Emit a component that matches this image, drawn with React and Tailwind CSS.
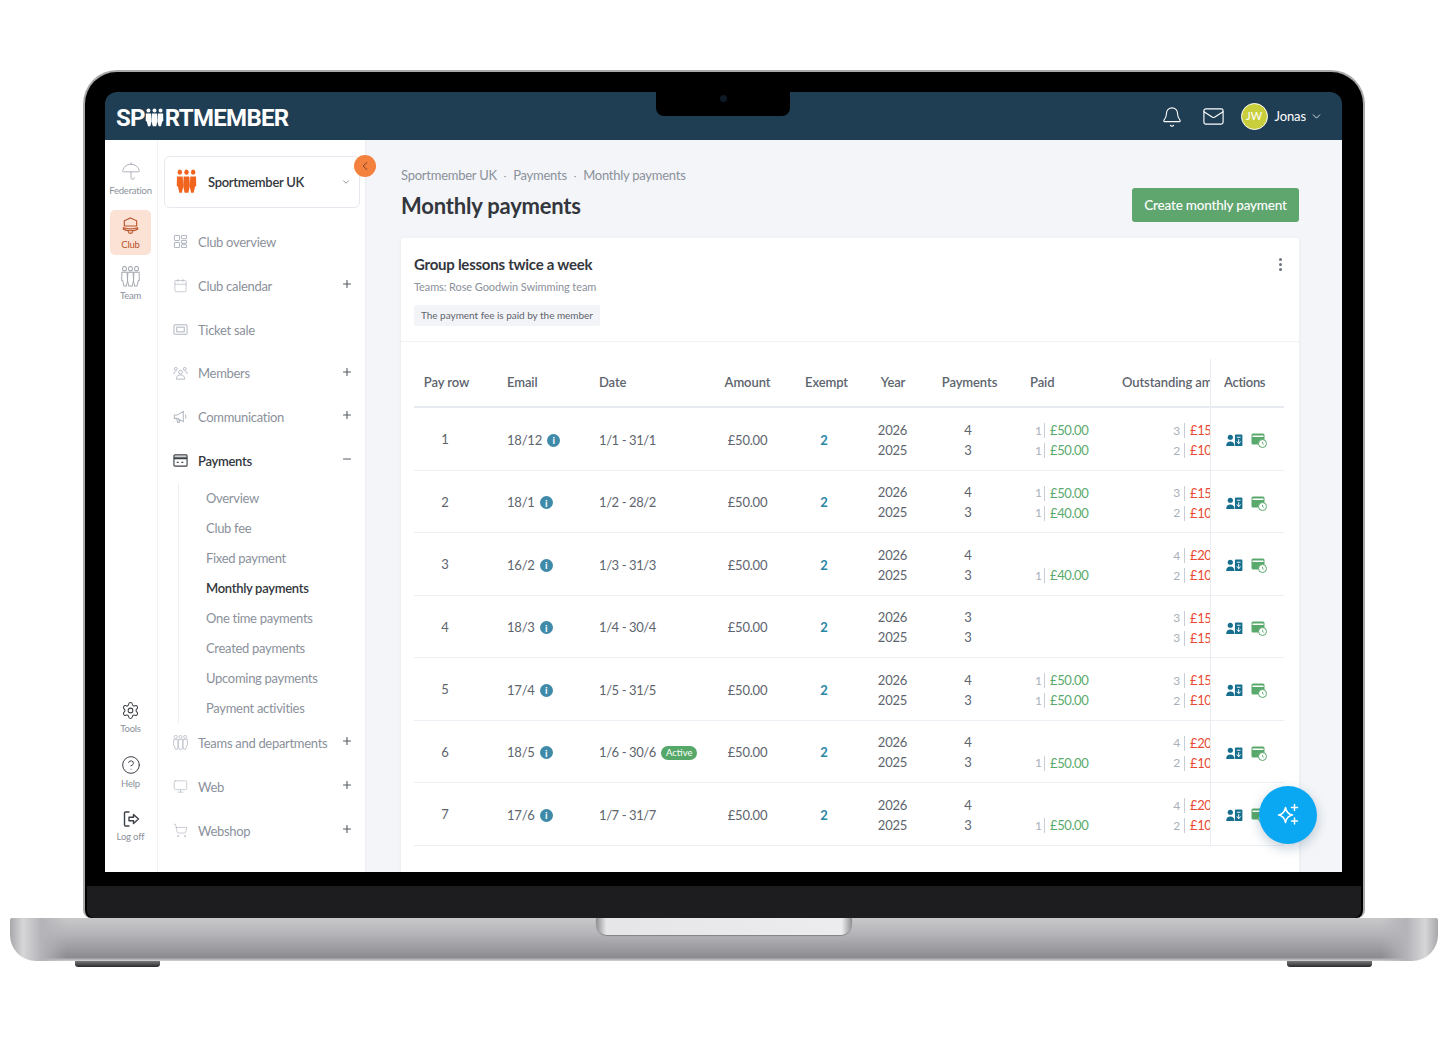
import React from "react";
import { Bell, Mail, ChevronDown, ChevronLeft, Plus, Minus, Settings, CircleHelp, Calendar, Monitor, ShoppingCart, Umbrella } from "lucide-react";

function People({ className, color = "currentColor", stroke = false }) {
  const p = stroke ? { fill: "none", stroke: color, strokeWidth: 1.1 } : { fill: color };
  return (
    <svg viewBox="1 1 22 22" preserveAspectRatio="none" className={className}>
      <circle cx="5" cy="3.800" r="2.300" {...p} />
      <circle cx="12" cy="3.800" r="2.300" {...p} />
      <circle cx="19" cy="3.800" r="2.300" {...p} />
      <path d="M2 7.500h6l.6 9-1.400 5.500H4.500L3 16.500l-1.200-.5z" {...p} />
      <path d="M9 7.500h6l.5 8.500-1.500 6h-4l-1.500-6z" {...p} />
      <path d="M16 7.500h6l.2 8.500-1.200.5-1.500 5.500h-2.700l-1.400-5.500z" {...p} />
    </svg>
  );
}

function GridIcon() {
  return (
    <svg viewBox="0 0 16 16" className="w-[15px] h-[15px]" fill="none" stroke="#b3b8c2" strokeWidth="1.1">
      <rect x="1.500" y="1.500" width="5.500" height="5.500" rx="1" />
      <rect x="9" y="1.500" width="5.500" height="3.500" rx="1" />
      <rect x="1.500" y="9" width="5.500" height="5.500" rx="1" />
      <rect x="9" y="7" width="5.500" height="3" rx="1" />
      <rect x="9" y="11.500" width="5.500" height="3" rx="1" />
    </svg>
  );
}
function TicketIcon() {
  return (
    <svg viewBox="0 0 16 16" className="w-[15px] h-[15px]" fill="none" stroke="#b3b8c2" strokeWidth="1.1">
      <rect x="1" y="3" width="14" height="10" rx="1" />
      <rect x="4" y="5.500" width="8" height="5" />
    </svg>
  );
}
function MembersIcon() {
  return (
    <svg viewBox="0 0 16 16" className="w-[15px] h-[15px]" fill="none" stroke="#b3b8c2" strokeWidth="1">
      <circle cx="3" cy="3" r="1.500" />
      <circle cx="12.500" cy="3" r="1.500" />
      <circle cx="8" cy="6.500" r="2" />
      <path d="M3.500 14c0-3 2-4.500 4.500-4.500s4.500 1.500 4.500 4.500zM1 8.500c0-2 1-3 2.500-3M15 8.500c0-2-1-3-2.500-3" />
    </svg>
  );
}
function MegaIcon() {
  return (
    <svg viewBox="0 0 16 16" className="w-[15px] h-[15px]" fill="none" stroke="#b3b8c2" strokeWidth="1.1">
      <path d="M1.500 6.500v3.500h3l6.500 3.500V2.500L4.500 6.500zM4 10.500l1 4h2l-1-3.500M13 6c1 .8 1 3 0 4" />
    </svg>
  );
}
function CardIcon() {
  return (
    <svg viewBox="0 0 16 16" className="w-[15px] h-[15px]" fill="none" stroke="#3c4148" strokeWidth="1.2">
      <rect x="1" y="2" width="14" height="12" rx="1" />
      <path d="M1 6h14M4 10h2M9 10h2M1 4.500h14" />
    </svg>
  );
}
function LogOffIcon() {
  return (
    <svg viewBox="0 0 18 18" className="w-[18px] h-[18px]" fill="none" stroke="#3c4148" strokeWidth="1.400" strokeLinejoin="round" strokeLinecap="round">
      <path d="M7 2H3.500a1 1 0 0 0-1 1v12a1 1 0 0 0 1 1H7" />
      <path d="M7 7.200h4.500V4.500L16.500 9l-5 4.500v-2.700H7z" />
    </svg>
  );
}
function ClubIcon() {
  return (
    <svg viewBox="0 0 20 20" className="w-[19px] h-[19px]" fill="none" stroke="#b9532a" strokeWidth="1.200">
      <path d="M10 1l6.500 3v5.500H3.500V4zM2.500 11.500c2 0 3.500 1 7.500 1s5.500-1 7.500-1v1.500c-2 1.200-4 1.500-7.500 1.500s-5.500-.3-7.500-1.500zM7.500 15c.5 3 4.500 3 5 0" />
    </svg>
  );
}
function PersonPhone() {
  return (
    <svg viewBox="0 0 18 14" className="w-[17px] h-[13px]">
      <circle cx="4.500" cy="3.500" r="2.800" fill="#176f8e" />
      <path d="M0 13c0-3.500 2-5 4.500-5S9 9.500 9 13z" fill="#176f8e" />
      <rect x="9.500" y="0.500" width="8" height="12.500" rx="1" fill="#176f8e" />
      <path d="M11.500 3.500h4M13.500 5.500v5M11.500 8l2 2.500 2-2.500" stroke="#fff" strokeWidth="1" fill="none" />
    </svg>
  );
}
function CardClock() {
  return (
    <svg viewBox="0 0 16 15" className="w-[16px] h-[15px]">
      <rect x="0.500" y="0.500" width="13" height="11" rx="1.500" fill="#5aa96c" />
      <rect x="1.500" y="2.500" width="11" height="1.500" fill="#fff" />
      <circle cx="11.500" cy="10.500" r="4" fill="#fff" stroke="#5aa96c" strokeWidth="1" />
      <path d="M11.500 8.800v1.800l1.300.7" stroke="#5aa96c" strokeWidth="0.900" fill="none" />
    </svg>
  );
}
function Sparkle() {
  return (
    <svg viewBox="0 0 26 26" className="w-[26px] h-[26px]" fill="none" stroke="#fff" strokeWidth="1.500" strokeLinejoin="round" strokeLinecap="round">
      <path d="M10.500 5.500c.8 4.500 2.500 6.800 7 7.500-4.500.8-6.200 3-7 7.500-.8-4.500-2.500-6.700-7-7.500 4.500-.7 6.200-3 7-7.500z" />
      <path d="M19.500 2.500v6M16.500 5.500h6M19.500 16v6M16.500 19h6" />
    </svg>
  );
}
function Info() {
  return (
    <span className="w-[13px] h-[13px] rounded-full bg-[#3f8aa8] flex items-center justify-center text-white text-[10px] font-bold leading-none shrink-0">i</span>
  );
}

const navTop = [
  { label: "Club overview", icon: <GridIcon /> },
  { label: "Club calendar", icon: <Calendar size={15} strokeWidth={1.1} color="#b3b8c2" />, plus: true },
  { label: "Ticket sale", icon: <TicketIcon /> },
  { label: "Members", icon: <MembersIcon />, plus: true },
  { label: "Communication", icon: <MegaIcon />, plus: true },
];
const navBottom = [
  { label: "Teams and departments", icon: <People className="w-[15px] h-[15px]" color="#b3b8c2" stroke />, plus: true },
  { label: "Web", icon: <Monitor size={15} strokeWidth={1.1} color="#b3b8c2" />, plus: true },
  { label: "Webshop", icon: <ShoppingCart size={15} strokeWidth={1.1} color="#b3b8c2" />, plus: true },
];
const subs = ["Overview", "Club fee", "Fixed payment", "Monthly payments", "One time payments", "Created payments", "Upcoming payments", "Payment activities"];

const rows = [
  { n: 1, e: "18/12", d: "1/1 - 31/1", p: [4, 3], paid: [[1, "50"], [1, "50"]], out: [[3, "150"], [2, "100"]] },
  { n: 2, e: "18/1", d: "1/2 - 28/2", p: [4, 3], paid: [[1, "50"], [1, "40"]], out: [[3, "150"], [2, "100"]] },
  { n: 3, e: "16/2", d: "1/3 - 31/3", p: [4, 3], paid: [null, [1, "40"]], out: [[4, "200"], [2, "100"]] },
  { n: 4, e: "18/3", d: "1/4 - 30/4", p: [3, 3], paid: [null, null], out: [[3, "150"], [3, "150"]] },
  { n: 5, e: "17/4", d: "1/5 - 31/5", p: [4, 3], paid: [[1, "50"], [1, "50"]], out: [[3, "150"], [2, "100"]] },
  { n: 6, e: "18/5", d: "1/6 - 30/6", active: true, p: [4, 3], paid: [null, [1, "50"]], out: [[4, "200"], [2, "100"]] },
  { n: 7, e: "17/6", d: "1/7 - 31/7", p: [4, 3], paid: [null, [1, "50"]], out: [[4, "200"], [2, "100"]] },
];

const gridCols = "grid grid-cols-[62px_113px_126px_65px_93px_40px_110px_77px_110px_74px]";

function NavItem({ label, icon, plus, minus, active }) {
  return (
    <div className="h-[43.75px] flex items-center pl-[15px] pr-[12px]">
      <span className="w-[25px] flex shrink-0">{icon}</span>
      <span className={active ? "mt-[2px] text-[13px] text-[#33373d] font-semibold tracking-[-0.3px]" : "mt-[2px] text-[13px] text-[#8b919b] tracking-[-0.3px]"}>{label}</span>
      <span className="ml-auto -mt-[3px]">
        {plus && <Plus size={12} strokeWidth={2.2} color="#555a62" />}
        {minus && <Minus size={12} strokeWidth={2.2} color="#555a62" />}
      </span>
    </div>
  );
}

function RailItem({ icon, label, active, labelClass = "mt-[3px]" }) {
  return (
    <div className={active ? "w-[41px] h-[45px] rounded-[5px] bg-[#fbe2d5] flex flex-col items-center pt-[7px] text-[#b9532a]" : "w-[41px] flex flex-col items-center text-[#8b919b]"}>
      {icon}
      <span className={`text-[9.5px] leading-[12px] tracking-[-0.2px] ${labelClass}`}>{label}</span>
    </div>
  );
}

function Money({ item, color, numW }) {
  if (!item) return <div className="h-[20px]" />;
  return (
    <div className="h-[20px] flex items-center whitespace-nowrap">
      <span className={`${numW} text-right text-[12px] text-[#aab0ba] shrink-0`}>{item[0]}</span>
      <span className="w-[1px] h-[15px] bg-[#c9ced6] ml-[4px] mr-[5px] shrink-0" />
      <span className={`text-[13px] tracking-[-0.4px] ${color}`}>£{item[1]}.00</span>
    </div>
  );
}

function Row({ r }) {
  return (
    <div className={`${gridCols} h-[62.5px] border-b border-[#eceff4] items-center text-[13px] tracking-[-0.2px] text-[#5d646e]`}>
      <div className="text-center pt-[2px]">{r.n}</div>
      <div className="pl-[31px] pt-[3px] flex items-center gap-[5px]">{r.e}<Info /></div>
      <div className="pl-[10px] pt-[3px] flex items-center gap-[5px] whitespace-nowrap tracking-[-0.4px]">
        {r.d}
        {r.active && <span className="h-[14px] px-[5px] rounded-full bg-[#55a868] text-white text-[9.5px] tracking-normal leading-[14px]">Active</span>}
      </div>
      <div className="text-center pt-[3px]">£50.00</div>
      <div className="text-center pr-[5px] pt-[3px] font-bold text-[#2b86a5]">2</div>
      <div className="leading-[20px] text-center -ml-[1px] pt-[2px]"><div>2026</div><div>2025</div></div>
      <div className="leading-[20px] text-center pt-[2px]"><div>{r.p[0]}</div><div>{r.p[1]}</div></div>
      <div className="pl-[12px] pt-[4px]">
        <Money item={r.paid[0]} color="text-[#5aaa6e]" numW="w-[5px]" />
        <Money item={r.paid[1]} color="text-[#5aaa6e]" numW="w-[5px]" />
      </div>
      <div className="pl-[73px] overflow-hidden pt-[4px]">
        <Money item={r.out[0]} color="text-[#ea4a35]" numW="w-[7px]" />
        <Money item={r.out[1]} color="text-[#ea4a35]" numW="w-[7px]" />
      </div>
      <div className="h-full border-l border-[#e8ecf2] pl-[15px] pt-[4px] flex items-center gap-[8px]">
        <PersonPhone />
        <CardClock />
      </div>
    </div>
  );
}

export default function App() {
  return (
    <div className="w-[1448px] h-[1063px] bg-white overflow-hidden pt-[70px] font-[Lato,sans-serif]">
      {/* Lid */}
      <div className="relative ml-[83px] w-[1282px] h-[848px] rounded-t-[34px] rounded-b-[8px] bg-black border-[2px] border-b-0 border-[#a9a9ac] pt-[20px] pl-[20px] flex flex-col">
        <div className="w-[1237px] h-[780px] rounded-t-[12px] overflow-hidden flex flex-col relative shrink-0">
          {/* Notch */}
          <div className="absolute left-[551px] top-0 w-[134px] h-[24px] bg-black rounded-b-[8px] z-20 flex justify-center pt-[3px]">
            <span className="w-[7px] h-[7px] rounded-full bg-[#0d1a26]" />
          </div>
          {/* Header */}
          <header className="h-[48px] bg-[#1f3d53] flex items-center pl-[11px] pr-[19px] shrink-0">
            <div className="flex items-center pt-[3px] text-white font-[Roboto,sans-serif] font-bold text-[24px] tracking-[-0.7px] leading-none">
              <span>SP</span>
              <People className="w-[19px] h-[19px]" color="#fff" />
              <span className="ml-[1px]">RTMEMBER</span>
            </div>
            <div className="ml-auto flex items-center text-white pt-[1px]">
              <Bell size={22} strokeWidth={1.2} />
              <Mail size={23} strokeWidth={1.2} className="ml-[19px]" />
              <div className="ml-[16px] w-[27px] h-[27px] rounded-full bg-[#c9cf3c] border border-white flex items-center justify-center text-[11px]">JW</div>
              <span className="ml-[7px] text-[13px] tracking-[-0.1px]">Jonas</span>
              <ChevronDown size={13} strokeWidth={1.5} className="ml-[4px]" />
            </div>
          </header>
          {/* Body */}
          <div className="flex-1 flex min-h-0 bg-[#f3f5f8]">
            {/* Rail */}
            <aside className="w-[53px] bg-white border-r border-[#f2f3f6] flex flex-col items-center pt-[21px] pb-[29px] pr-[1px] shrink-0">
              <RailItem icon={<Umbrella size={20} strokeWidth={1} color="#a1a6ae" />} label="Federation" labelClass="mt-[4px]" />
              <div className="mt-[13px]"><RailItem active icon={<ClubIcon />} label="Club" /></div>
              <div className="mt-[11px]"><RailItem icon={<People className="w-[19px] h-[21px]" color="#a1a6ae" stroke />} label="Team" /></div>
              <div className="mt-auto flex flex-col gap-[20px] text-[#8b919b]">
                <RailItem icon={<Settings size={19} strokeWidth={1.3} color="#3c4148" />} label="Tools" />
                <RailItem icon={<CircleHelp size={20} strokeWidth={1.2} color="#3c4148" />} label="Help" />
                <RailItem icon={<LogOffIcon />} label="Log off" />
              </div>
            </aside>
            {/* Sidebar */}
            <aside className="relative w-[207px] bg-white pt-[16px] shrink-0 shadow-[1px_0_2px_rgba(20,30,50,0.04)]">
              <span className="absolute left-[196px] top-[15px] w-[22px] h-[22px] rounded-full bg-[#f5813f] flex items-center justify-center z-10">
                <ChevronLeft size={14} strokeWidth={1.400} color="#5a3020" />
              </span>
              <div className="ml-[6px] w-[196px] h-[52px] rounded-[6px] border border-[#e6e8ef] flex items-center pl-[11px] pr-[8px]">
                <People className="w-[21px] h-[25px] -mt-[2px]" color="#f0641e" />
                <span className="ml-[11px] mt-[1px] text-[13px] font-semibold text-[#33373d] tracking-[-0.3px]">Sportmember UK</span>
                <ChevronDown size={10} strokeWidth={1.500} color="#555a62" className="ml-auto" />
              </div>
              <nav className="mt-[12px]">
                {navTop.map((n) => <NavItem key={n.label} {...n} />)}
                <NavItem label="Payments" icon={<CardIcon />} minus active />
                <div className="ml-[20px] border-l border-[#eceff4] pl-[27px] -mb-[1.6px]">
                  {subs.map((s) => (
                    <div key={s} className={s === "Monthly payments" ? "h-[30px] pt-[2px] flex items-center text-[13px] font-semibold text-[#33373d] tracking-[-0.3px]" : "h-[30px] pt-[2px] flex items-center text-[13px] text-[#8b919b] tracking-[-0.3px]"}>{s}</div>
                  ))}
                </div>
                {navBottom.map((n) => <NavItem key={n.label} {...n} />)}
              </nav>
            </aside>
            {/* Main */}
            <main className="flex-1 min-w-0 pl-[36px] pr-[43px] pt-[25px] relative">
              <div className="h-[19px] pt-[2px] flex items-center gap-[7px] text-[13px] text-[#8b919b] tracking-[-0.25px]">
                <span>Sportmember UK</span><span className="text-[10px]">·</span><span>Payments</span><span className="text-[10px]">·</span><span>Monthly payments</span>
              </div>
              <div className="mt-[4px] h-[34px] flex items-center justify-between">
                <h1 className="text-[22px] font-bold text-[#33373d] tracking-[-0.2px]">Monthly payments</h1>
                <button className="w-[167px] h-[34px] pt-[1px] rounded-[3px] bg-[#5fa56e] text-white text-[13.5px] font-medium tracking-[-0.2px]">Create monthly payment</button>
              </div>
              <section className="mt-[16px] bg-white rounded-[3px] shadow-[0_1px_4px_rgba(20,30,50,0.06)] h-[700px]">
                <div className="pt-[17px] pl-[13px] pr-[17px] pb-[15px] border-b border-[#f0f2f6] relative">
                  <div className="flex justify-between items-center h-[19px]">
                    <h2 className="text-[15px] font-bold text-[#33373d] tracking-[-0.25px]">Group lessons twice a week</h2>
                    <span className="flex flex-col gap-[2px]">
                      <i className="w-[3px] h-[3px] rounded-full bg-[#6b7280]" />
                      <i className="w-[3px] h-[3px] rounded-full bg-[#6b7280]" />
                      <i className="w-[3px] h-[3px] rounded-full bg-[#6b7280]" />
                    </span>
                  </div>
                  <div className="mt-[4px] h-[18px] flex items-center text-[11px] tracking-[-0.1px] text-[#8b919b]">Teams: Rose Goodwin Swimming team</div>
                  <div className="mt-[9px] h-[21px] w-fit px-[7px] rounded-[2px] bg-[#f3f4f7] flex items-center text-[10px] tracking-[-0.03px] text-[#5d646e]">The payment fee is paid by the member</div>
                </div>
                <div className="pl-[13px] pr-[15px] pt-[17px]">
                  <div className={`${gridCols} h-[49px] border-b-2 border-[#e8ecf2] items-center text-[13px] font-semibold text-[#5d646e] tracking-[-0.1px]`}>
                    <div className="text-center pl-[3px] whitespace-nowrap">Pay row</div>
                    <div className="pl-[31px]">Email</div>
                    <div className="pl-[10px]">Date</div>
                    <div className="text-center">Amount</div>
                    <div className="text-center">Exempt</div>
                    <div className="text-center">Year</div>
                    <div className="text-center pl-[3px]">Payments</div>
                    <div className="pl-[7px]">Paid</div>
                    <div className="pl-[22px] overflow-hidden whitespace-nowrap">Outstanding amount</div>
                    <div className="h-full border-l border-[#e8ecf2] pl-[13px] tracking-[-0.3px] flex items-center">Actions</div>
                  </div>
                  {rows.map((r) => <Row key={r.n} r={r} />)}
                </div>
              </section>
              <button className="absolute left-[894px] top-[646px] w-[58px] h-[58px] rounded-full bg-[#0aa7f2] flex items-center justify-center shadow-[0_4px_12px_rgba(10,60,100,0.25)]">
                <Sparkle />
              </button>
            </main>
          </div>
        </div>
        {/* Chin */}
        <div className="h-[14px] bg-black shrink-0 -ml-[20px]" />
        <div className="h-[32px] bg-[#1d1d1f] shrink-0 -ml-[18px] mr-[2px] rounded-b-[8px]" />
      </div>
      {/* Base */}
      <div className="ml-[10px] w-[1428px] h-[43px] rounded-b-[26px] rounded-t-[2px] bg-[linear-gradient(90deg,#a8a8ac_0%,#d6d6d9_0.9%,#b4b4b8_2.2%,transparent_4%,transparent_96%,#b4b4b8_97.8%,#d6d6d9_99.1%,#a8a8ac_100%),linear-gradient(180deg,#c8c8cb_0%,#b6b6ba_35%,#99999d_75%,#8c8c90_92%,#d4d4d7_100%)] flex justify-center">
        <div className="w-[256px] h-[17px] rounded-b-[12px] bg-[linear-gradient(90deg,#8f8f93_0%,#e6e6e8_4%,#ececee_96%,#8f8f93_100%)] shadow-[0_1px_1px_rgba(80,80,85,0.5)]" />
      </div>
      {/* Feet */}
      <div className="ml-[75px] w-[1297px] flex justify-between">
        <div className="w-[85px] h-[6px] rounded-b-[3px] bg-[linear-gradient(180deg,#77777a,#2a2a2c)]" />
        <div className="w-[85px] h-[6px] rounded-b-[3px] bg-[linear-gradient(180deg,#77777a,#2a2a2c)]" />
      </div>
    </div>
  );
}
